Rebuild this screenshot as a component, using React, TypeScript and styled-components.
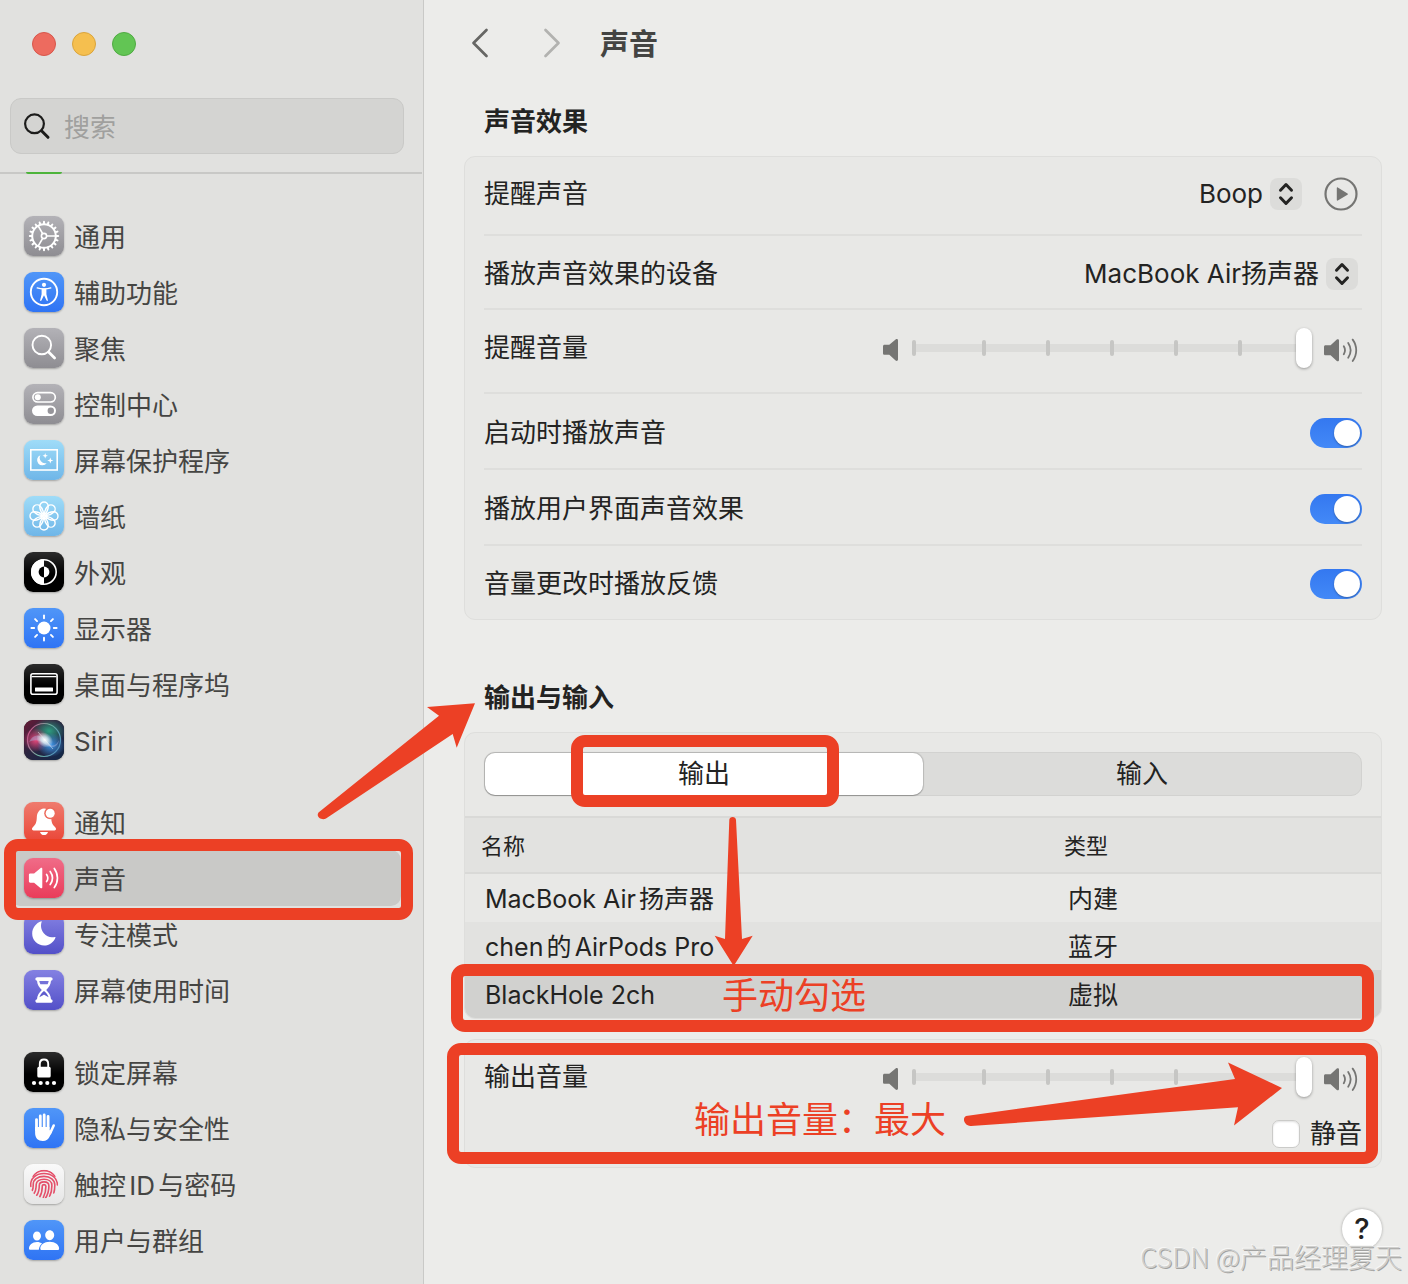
import React, { useState } from 'react';
import styled, { createGlobalStyle, css } from 'styled-components';

const RED = '#ec4025';

const GlobalStyle = createGlobalStyle`
  *, *::before, *::after { box-sizing: border-box; }
  body {
    margin: 0;
    background: #ececea;
    color: #232322;
    font-family: Inter, "Noto Sans CJK SC", sans-serif;
    font-size: 26px;
    line-height: 36px;
    text-autospace: normal;
  }
  button, input, select { font: inherit; color: inherit; margin: 0; }
  button { border: 0; padding: 0; background: none; cursor: pointer; }
  svg { display: block; flex: none; }
`;

/* ---------- window ---------- */

const Window = styled.div`
  position: relative;
  display: grid;
  grid-template-columns: 424px minmax(0, 1fr);
  min-height: 100vh;
  overflow: hidden;
`;

const Sidebar = styled.aside`
  background: #e1e1df;
  border-right: 1px solid #c9c9c7;
  padding-bottom: 16px;
`;

const TrafficLights = styled.div`
  display: flex;
  gap: 16px;
  padding: 32px 32px 42px;
`;

const Light = styled.button<{ $fill: string; $edge: string }>`
  width: 24px;
  height: 24px;
  border-radius: 50%;
  background: ${(p) => p.$fill};
  border: 1px solid ${(p) => p.$edge};
`;

const SearchField = styled.label`
  display: flex;
  align-items: center;
  gap: 13px;
  height: 56px;
  margin: 0 19px 18px 10px;
  padding: 0 12px;
  border: 1px solid #c9c9c7;
  border-radius: 11px;
  background: #d4d4d2;
`;

const SearchInput = styled.input`
  flex: 1;
  min-width: 0;
  border: 0;
  padding: 3px 0 0;
  outline: 0;
  background: none;
  &::placeholder { color: #a0a09e; opacity: 1; }
`;

const ScrollEdge = styled.div`
  height: 2px;
  padding-left: 26px;
  margin-right: 1px;
  background: #c8c8c6;
`;

const ScrolledIcon = styled.div`
  width: 36px;
  height: 2px;
  border-radius: 0 0 8px 8px;
  background: #4db43b;
`;

const Nav = styled.nav`
  display: flex;
  flex-direction: column;
  gap: 26px;
  padding: 34px 22px 0 10px;
`;

const NavGroup = styled.ul`
  list-style: none;
  margin: 0;
  padding: 0;
`;

const NavLink = styled.a<{ $active?: boolean }>`
  position: relative;
  display: flex;
  align-items: center;
  gap: 10px;
  height: 56px;
  padding-left: 14px;
  border-radius: 10px;
  color: #454543;
  text-decoration: none;
  background: ${(p) => (p.$active ? '#c9c9c7' : 'transparent')};
`;

const NavIcon = styled.span<{ $bg: string }>`
  flex: none;
  width: 40px;
  height: 40px;
  border-radius: 9px;
  background: ${(p) => p.$bg};
  box-shadow: 0 1px 2px rgba(0, 0, 0, 0.28);
  overflow: hidden;
`;

const NavLabel = styled.span`
  padding-top: 4px;
`;

/* ---------- content ---------- */

const Main = styled.main`
  padding: 0 26px 36px 40px;
`;

const Header = styled.header`
  display: flex;
  align-items: center;
  height: 86px;
`;

const HistoryButton = styled.button`
  display: grid;
  place-items: center;
  width: 32px;
  height: 40px;
  & + & { margin-left: 40px; }
`;

const PageTitle = styled.h1`
  margin: 0 0 0 32px;
  padding-top: 4px;
  font-size: 29px;
  font-weight: 700;
  color: #444442;
`;

const SectionTitle = styled.h2<{ $spaced?: boolean }>`
  position: relative;
  margin: ${(p) => (p.$spaced ? 60 : 18)}px 0 16px;
  padding-left: 20px;
  font-size: 26px;
  font-weight: 700;
`;

const Card = styled.section`
  position: relative;
  border: 1px solid #dededc;
  border-radius: 11px;
  background: #e8e8e6;
  & + & { margin-top: 20px; }
`;

const Rows = styled.div<{ $roomy?: boolean }>`
  padding: 0 19px ${(p) => (p.$roomy ? 13 : 0)}px;
`;

const Row = styled.div<{ $height: number; $lift?: number; $drop?: number }>`
  display: flex;
  align-items: center;
  justify-content: space-between;
  height: ${(p) => p.$height}px;
  padding-top: ${(p) => p.$drop ?? 0}px;
  padding-bottom: ${(p) => p.$lift ?? 0}px;
  border-bottom: 2px solid #dededc;
  &:last-child { border-bottom: 0; }
`;

const PlainRow = styled.div<{ $height: number; $end?: boolean }>`
  display: flex;
  align-items: center;
  justify-content: ${(p) => (p.$end ? 'flex-end' : 'space-between')};
  height: ${(p) => p.$height}px;
`;

const Controls = styled.div`
  display: flex;
  align-items: center;
  gap: 22px;
  padding-right: 4px;
`;

const PickerBox = styled.span`
  display: grid;
  align-items: center;
  & > * { grid-area: 1 / 1; }
`;

const Picker = styled.select`
  appearance: none;
  border: 0;
  background: none;
  padding: 0 39px 0 0;
  height: 36px;
  text-align-last: right;
`;

const Stepper = styled.span`
  display: grid;
  place-items: center;
  justify-self: end;
  width: 32px;
  height: 32px;
  border-radius: 8px;
  background: #dcdcda;
  pointer-events: none;
`;

const Switch = styled.input`
  appearance: none;
  display: flex;
  align-items: center;
  width: 52px;
  height: 30px;
  padding: 2px;
  border-radius: 15px;
  background: #c8c8c6;
  &::after {
    content: '';
    width: 26px;
    height: 26px;
    border-radius: 50%;
    background: #fff;
    box-shadow: 0 1px 2px rgba(0, 0, 0, 0.3);
  }
  &:checked {
    justify-content: flex-end;
    background: linear-gradient(#3478f0, #4389f7);
  }
`;

const Volume = styled.div`
  display: flex;
  align-items: center;
  gap: 12px;
  padding-right: 4px;
`;

const SliderBox = styled.div`
  display: grid;
  align-items: center;
  width: 400px;
  & > * { grid-area: 1 / 1; }
`;

const Track = styled.div`
  height: 8px;
  border-radius: 4px;
  background: #dcdcda;
`;

const Ticks = styled.div`
  display: grid;
  grid-template-columns: repeat(6, 1fr);
  padding: 0 8px;
`;

const Tick = styled.span`
  width: 4px;
  height: 16px;
  margin-left: -2px;
  border-radius: 2px;
  background: #c6c6c4;
  &:first-child { margin-left: -8px; }
`;

const Range = styled.input`
  appearance: none;
  width: 100%;
  height: 40px;
  background: none;
  &::-webkit-slider-thumb {
    appearance: none;
    width: 16px;
    height: 40px;
    border-radius: 8px;
    background: #fff;
    box-shadow: 0 1px 3px rgba(0, 0, 0, 0.35);
  }
`;

const Segmented = styled.div`
  display: grid;
  grid-template-columns: 1fr 1fr;
  height: 44px;
  margin: 19px 19px 20px;
  border: 1px solid #d2d2d0;
  border-radius: 11px;
  background: #dcdcda;
`;

const Segment = styled.button<{ $on: boolean }>`
  position: relative;
  border-radius: 10px;
  line-height: 36px;
  ${(p) =>
    p.$on &&
    css`
      background: #fff;
      box-shadow: 0 0 1px 1px rgba(0, 0, 0, 0.14), 0 1px 1px rgba(0, 0, 0, 0.2);
    `}
`;

const Table = styled.table`
  width: 100%;
  border-collapse: separate;
  border-spacing: 0;
  table-layout: fixed;
`;

const HeadCell = styled.th<{ $narrow?: boolean }>`
  width: ${(p) => (p.$narrow ? '333px' : 'auto')};
  height: 58px;
  padding: 2px 16px 0;
  border: solid #d9d9d7;
  border-width: 2px 0;
  background: #e2e2e0;
  font-size: 22px;
  font-weight: 400;
  text-align: left;
`;

const BodyRow = styled.tr<{ $bg: string }>`
  position: relative;
  height: 48px;
  & > td { background: ${(p) => p.$bg}; }
  &:last-child > td:first-child { border-bottom-left-radius: 10px; }
  &:last-child > td:last-child { border-bottom-right-radius: 10px; }
`;

const Cell = styled.td`
  padding: 2px 20px 0;
  font-size: 25px;
  white-space: nowrap;
`;

const Mute = styled.label`
  display: flex;
  align-items: center;
  gap: 10px;
`;

const MuteBox = styled.input`
  appearance: none;
  width: 28px;
  height: 28px;
  border: 1px solid #cbcbc9;
  border-radius: 7px;
  background: #fff;
  box-shadow: inset 0 1px 2px rgba(0, 0, 0, 0.12);
  &:checked { background: #3478f0; }
`;

const Footer = styled.footer`
  display: flex;
  justify-content: flex-end;
  padding-top: 41px;
`;

const HelpButton = styled.button`
  width: 40px;
  height: 40px;
  border-radius: 50%;
  background: #fff;
  box-shadow: 0 0 3px rgba(0, 0, 0, 0.3);
  font-size: 29px;
  font-weight: 500;
`;

/* ---------- marks drawn over the settings ---------- */

const Frame = styled.span<{ $inset: string }>`
  position: absolute;
  z-index: 2;
  inset: ${(p) => p.$inset};
  border: 12px solid ${RED};
  border-radius: 14px;
  pointer-events: none;
`;

const ArrowSvg = styled.svg<{ $inset: string }>`
  position: absolute;
  z-index: 3;
  inset: ${(p) => p.$inset};
  fill: ${RED};
  pointer-events: none;
`;

const Note = styled.span<{ $inset: string }>`
  position: absolute;
  z-index: 3;
  inset: ${(p) => p.$inset};
  font-size: 36px;
  font-weight: 400;
  line-height: 40px;
  color: ${RED};
  white-space: nowrap;
`;

const Watermark = styled.div`
  position: absolute;
  right: 6px;
  bottom: 13px;
  z-index: 4;
  font-family: "Noto Sans CJK SC", sans-serif;
  font-size: 27px;
  font-weight: 300;
  line-height: 30px;
  text-autospace: no-autospace;
  color: #cfcfcd;
  text-shadow: 1px 1px 0 #a3a3a1, -1px -1px 0 #f6f6f5;
  pointer-events: none;
`;

/* ---------- icons, each on a 40 x 40 tile ---------- */

const Tile = ({ children }: { children: React.ReactNode }) => (
  <svg width="40" height="40" viewBox="0 0 40 40" fill="none" stroke="#fff" strokeWidth="1.7" strokeLinecap="round" strokeLinejoin="round" aria-hidden="true">
    {children}
  </svg>
);

const turns = (n: number) => Array.from({ length: n }, (_, i) => (360 / n) * i);
const solid = { fill: '#fff', stroke: 'none' };

const GearIcon = () => (
  <Tile>
    <circle cx="20" cy="20" r="11.8" strokeWidth="2" />
    {turns(20).map((a) => (
      <path key={a} d="M20 7.6V5.8" strokeWidth="2" transform={`rotate(${a} 20 20)`} />
    ))}
    <circle cx="20" cy="20" r="2.6" strokeWidth="1.6" />
    {[90, 210, 330].map((a) => (
      <path key={a} d="M20 17V8.6" strokeWidth="1.7" transform={`rotate(${a} 20 20)`} />
    ))}
  </Tile>
);

const AccessIcon = () => (
  <Tile>
    <circle cx="20" cy="20" r="13.2" strokeWidth="1.9" />
    <circle cx="20" cy="12.8" r="2.1" {...solid} />
    <path d="M13.2 15.9c2 .7 4.1 1 6.8 1s4.8-.3 6.8-1" strokeWidth="1.4" />
    <path d="M17.6 16.6h4.8v5.6l1.5 6.1c.1.8-1 1-1.3.3L20 23.2l-2.6 5.4c-.3.7-1.4.5-1.3-.3l1.5-6.1z" {...solid} />
  </Tile>
);

const SpotlightIcon = () => (
  <Tile>
    <circle cx="17.8" cy="17" r="9.3" strokeWidth="1.9" />
    <path d="M24.6 23.9l6 6" strokeWidth="2.8" />
  </Tile>
);

const ControlIcon = () => (
  <Tile>
    <rect x="8.9" y="8.6" width="22.4" height="9.4" rx="4.7" strokeWidth="1.7" />
    <circle cx="13.8" cy="13.3" r="3" {...solid} />
    <rect x="8" y="21.5" width="24" height="10.6" rx="5.3" {...solid} />
    <circle cx="26.8" cy="26.8" r="3.2" fill="#96959a" stroke="none" />
  </Tile>
);

const SaverIcon = () => (
  <Tile>
    <rect x="6.8" y="9.8" width="26.4" height="20.2" strokeWidth="1.6" strokeLinejoin="miter" />
    <path d="M16.4 15.3a5.2 5.2 0 1 0 6.3 7.6 5.3 5.3 0 0 1-6.3-7.6z" {...solid} />
    <path d="M21.2 13l.7 2 2 .7-2 .7-.7 2-.7-2-2-.7 2-.7zM26.3 17.4l.8 2.3 2.3.8-2.3.8-.8 2.3-.8-2.3-2.3-.8 2.3-.8z" {...solid} />
  </Tile>
);

const FlowerIcon = () => (
  <Tile>
    {turns(8).map((a) => (
      <path key={a} d="M20 19C17.4 17 15.800 13.400 15.800 10.200a4.200 4.200 0 0 1 8.400 0C24.200 13.400 22.600 17 20 19z" strokeWidth="1.4" transform={`rotate(${a} 20 20)`} />
    ))}
    <circle cx="20" cy="20" r="3" strokeWidth="1.200" />
  </Tile>
);

const AppearanceIcon = () => (
  <Tile>
    <circle cx="20" cy="20" r="12.2" strokeWidth="1.6" />
    <path d="M20 7a13 13 0 0 0 0 26z" {...solid} />
    <path d="M20 14.6a5.4 5.4 0 0 0 0 10.8z" fill="#000" stroke="none" />
    <path d="M20 14.6a5.4 5.4 0 0 1 0 10.8z" {...solid} />
  </Tile>
);

const DisplayIcon = () => (
  <Tile>
    <circle cx="20" cy="20" r="6.5" {...solid} />
    {turns(8).map((a) => (
      <path key={a} d="M20 10.2V7.4" strokeWidth="1.9" transform={`rotate(${a} 20 20)`} />
    ))}
  </Tile>
);

const DockIcon = () => (
  <Tile>
    <rect x="6.9" y="9.8" width="26.2" height="20.4" rx="2" strokeWidth="1.6" />
    <path d="M8 12.7h24" strokeWidth="1.2" />
    <rect x="11" y="23.4" width="18" height="4" rx=".5" {...solid} />
  </Tile>
);

const SiriIcon = () => (
  <svg width="40" height="40" viewBox="0 0 40 40" aria-hidden="true">
    <defs>
      <linearGradient id="siriBase" x1="0" y1="0" x2="1" y2="1">
        <stop offset="0" stopColor="#6a1a36" />
        <stop offset=".45" stopColor="#2b2440" />
        <stop offset="1" stopColor="#10294a" />
      </linearGradient>
      <radialGradient id="siriGreen"><stop offset="0" stopColor="#2c9d80" /><stop offset="1" stopColor="#2c9d80" stopOpacity="0" /></radialGradient>
      <radialGradient id="siriPink"><stop offset="0" stopColor="#e8487c" /><stop offset="1" stopColor="#e8487c" stopOpacity="0" /></radialGradient>
      <radialGradient id="siriBlue"><stop offset="0" stopColor="#3e96e8" /><stop offset="1" stopColor="#3e96e8" stopOpacity="0" /></radialGradient>
      <radialGradient id="siriGlow"><stop offset="0" stopColor="#fff" /><stop offset=".4" stopColor="#e3f4f8" stopOpacity=".8" /><stop offset="1" stopColor="#fff" stopOpacity="0" /></radialGradient>
      <linearGradient id="siriRing" x1="0" y1=".3" x2="1" y2=".7"><stop offset="0" stopColor="#c9528a" /><stop offset=".5" stopColor="#6fb3a0" /><stop offset="1" stopColor="#4c8ec0" /></linearGradient>
    </defs>
    <rect width="40" height="40" fill="url(#siriBase)" />
    <ellipse cx="25" cy="11" rx="17" ry="13" fill="url(#siriGreen)" />
    <ellipse cx="12" cy="20" rx="13" ry="12" fill="url(#siriPink)" />
    <ellipse cx="27" cy="25" rx="14" ry="12" fill="url(#siriBlue)" />
    <circle cx="20" cy="20" r="16.5" fill="none" stroke="url(#siriRing)" strokeWidth="1.2" />
    <path d="M5 22c5-9 11-8 17-1s10 5 13-1c-1 8-8 9-14 4S9 20 5 22z" fill="#a9b6e0" opacity=".45" />
    <ellipse cx="20.5" cy="19.5" rx="9" ry="7" fill="url(#siriGlow)" transform="rotate(35 20 20)" />
    <path d="M14 12l15 17" stroke="#fff" strokeWidth="1" opacity=".45" />
  </svg>
);

const BellIcon = () => (
  <Tile>
    <path d="M20 6.6c-4.8.6-7 4.3-7.2 8.8-.2 5-1.2 7-3.6 9.4-.9.9-1.2 1.500-1.2 2.300 0 .8.6 1.300 1.500 1.300h21c.9 0 1.500-.5 1.500-1.300 0-.8-.3-1.400-1.200-2.300-2.400-2.400-3.400-4.400-3.600-9.400-.2-4.500-2.400-8.200-7.200-8.800z" {...solid} />
    <circle cx="26.2" cy="11.2" r="6" fill="#ec6b5c" stroke="none" />
    <circle cx="26.2" cy="11.2" r="4.5" {...solid} />
    <path d="M16 30h8c-.5 1.9-2 3.100-4 3.100S16.500 31.900 16 30z" {...solid} />
  </Tile>
);

const SoundIcon = () => (
  <Tile>
    <path d="M6.2 15.4c-.8 0-1.3.6-1.3 1.4v6.5c0 .8.5 1.4 1.3 1.4h3.9l6.3 5.2c.8.7 1.9.4 1.9-.7V10.9c0-1.1-1.1-1.4-1.9-.7l-6.3 5.2z" {...solid} />
    <path d="M22.6 16.4c1.5 2.2 1.5 5 0 7.2M26.2 13.4c2.8 4 2.8 9.200 0 13.200M30.300 10.400c4.200 5.800 4.200 13.400 0 19.200" strokeWidth="1.7" />
  </Tile>
);

const MoonIcon = () => (
  <Tile>
    <path d="M17.3 7.2c.3-.1.6.2.4.6-1.2 3-1 7.6 2.1 11.5 3 3.7 7.2 4.7 11.2 3.6.4-.1.7.2.5.6-1.7 4.600-6 8.100-11.400 8.100A11.900 11.900 0 0 1 8.200 19.700C8.200 13.800 12 8.900 17.300 7.200z" {...solid} />
  </Tile>
);

const HourglassIcon = () => (
  <Tile>
    <path d="M13.4 7.2h13.2c1.3 0 2 .8 2 1.8s-.7 1.7-1.6 1.7c-.2 4-2.3 6.700-4.800 9.300 2.500 2.600 4.600 5.200 4.800 9.300.9 0 1.600.7 1.600 1.700s-.7 1.800-2 1.800H13.400c-1.300 0-2-.8-2-1.800s.7-1.700 1.600-1.700c.2-4.100 2.300-6.700 4.800-9.300-2.500-2.600-4.600-5.300-4.800-9.300-.9 0-1.600-.7-1.600-1.700s.7-1.800 2-1.800z" {...solid} />
    <path d="M15.300 10.900h9.400c-.2 1.300-.6 2.400-1.100 3.400h-7.200c-.5-1-.9-2.100-1.100-3.400z" fill="#7572d8" stroke="none" />
    <path d="M20 21c2 1.800 3.900 3.600 4.600 6.300l-4-2.400c-.4-.2-.8-.2-1.200 0l-4 2.400c.7-2.700 2.600-4.500 4.600-6.300z" fill="#5f5ccd" stroke="none" />
  </Tile>
);

const LockIcon = () => (
  <Tile>
    <rect x="13.3" y="14.8" width="13.4" height="10.8" rx="1.6" {...solid} />
    <path d="M15.800 15v-3c0-2.800 1.700-4.500 4.200-4.500s4.200 1.700 4.200 4.500v3" strokeWidth="1.9" />
    {[10, 16.7, 23.3, 30].map((x) => (
      <circle key={x} cx={x} cy="31" r="2.1" {...solid} />
    ))}
  </Tile>
);

const HandIcon = () => (
  <Tile>
    <path d="M12.500 11.600V22M16.300 8V21M20.200 7V21M24.100 8.500V21" strokeWidth="2.8" />
    <path d="M29.700 17.500l-3.700 8" strokeWidth="2.6" />
    <path d="M11.100 19h14.400v3l2.500 1.500-2.200 4.800c-1.300 3-3.500 4.800-7 4.800-4.800 0-7.700-3-7.700-8z" {...solid} />
  </Tile>
);

const FingerprintIcon = () => (
  <svg width="40" height="40" viewBox="0 0 40 40" fill="none" stroke="#e4506a" strokeWidth="1.6" strokeLinecap="round" aria-hidden="true">
    <clipPath id="fingertip">
      <circle cx="20" cy="20" r="14.200" />
    </clipPath>
    <g clipPath="url(#fingertip)">
      <path d="M9 12.200C11.500 8.600 15.500 6.600 20 6.600s8.500 2 11 5.600" />
      <path d="M6.800 22.500C5.800 15 11.500 9.500 20 9.500c7.800 0 13.300 4.800 13.400 11.500" />
      <path d="M8.200 26.500c1.200-2 1-3.800 1-6.100 0-4.500 4.300-8 10.800-8s10.800 3.500 10.800 8.600c0 3.300-.2 5.500-1 8" />
      <path d="M10 29.500c2.200-3 2.200-5.800 2.200-9.100 0-3 3.300-5.200 7.800-5.200s7.900 2.400 7.900 6.200c0 4-.6 7.600-2.300 11" />
      <path d="M12.600 31.500c2.500-3.500 2.700-7 2.700-10.300 0-2 2-3.300 4.700-3.300s4.900 1.300 4.900 4.100c0 4.500-1.100 8.500-3.300 12" />
      <path d="M15.700 33c2.400-4 2.600-8 2.600-11 0-1.800 3.500-1.900 3.600.3.100 3.500-.7 7.200-2.600 11.200" />
    </g>
  </svg>
);

const UsersIcon = () => (
  <Tile>
    <path d="M13 11.600c2.200 0 4 1.900 4 4.400S15.200 20.500 13 20.500 9 18.500 9 16s1.800-4.400 4-4.400zM13 22c2 0 3.800.6 5.100 1.500-1.900 1.500-3.100 3.700-3.300 6.300H6.400c-.9 0-1.400-.5-1.400-1.400C5 25.200 8.200 22 13 22z" {...solid} />
    <path d="M25.700 10.200c2.500 0 4.500 2.200 4.500 4.900s-2 5.100-4.500 5.100-4.500-2.400-4.500-5.100 2-4.900 4.500-4.900zM25.700 21.800c5.600 0 9.400 3.300 9.400 6.600 0 1-.6 1.500-1.600 1.500H17.900c-1 0-1.600-.5-1.600-1.500 0-3.300 3.800-6.600 9.400-6.600z" {...solid} />
  </Tile>
);

const SpeakerLow = () => (
  <svg width="17" height="28" viewBox="1 0 17 28" fill="#757573" aria-hidden="true">
    <path d="M2.600 10.800h4.700l6.300-5.400c1-.8 2.400-.3 2.400 1v19.200c0 1.300-1.400 1.800-2.400 1l-6.300-5.800H2.600C1.600 20.800 1 20.200 1 19.200v-6.800c0-1 .6-1.600 1.600-1.600z" />
  </svg>
);

const SpeakerHigh = () => (
  <svg width="34" height="28" viewBox="0 0 34 28" fill="#757573" aria-hidden="true">
    <path d="M1.600 11.300h5l6.200-5.700c1-.8 2.200-.3 2.200 1v19.300c0 1.300-1.200 1.800-2.200 1l-6.200-5.600h-5C.6 21.300 0 20.700 0 19.700v-6.800c0-1 .6-1.600 1.600-1.600z" />
    <path d="M19.800 12.300c1.500 2.500 1.500 5.500 0 8M24.200 8.900c3 4.500 3 10.300 0 14.800M28.700 5.600c4.700 6.500 4.700 14.900 0 21.400" fill="none" stroke="#757573" strokeWidth="1.8" strokeLinecap="round" />
  </svg>
);

const StepperIcon = () => (
  <Stepper>
    <svg width="16" height="24" viewBox="0 0 16 24" fill="none" stroke="#232322" strokeWidth="3" strokeLinecap="round" strokeLinejoin="round" aria-hidden="true">
      <path d="M2.500 8.200L8 2.500l5.500 5.700M2.500 15.800L8 21.500l5.500-5.700" />
    </svg>
  </Stepper>
);

/* ---------- data ---------- */

const GREY = 'linear-gradient(#b3b2b7, #8e8d92)';
const BLUE = 'linear-gradient(#5096f8, #2f74f4)';
const SKY = 'linear-gradient(#9fdcf8, #6fb6e8)';
const BLACK = 'linear-gradient(#2c2c2c, #000 55%)';
const INDIGO = 'linear-gradient(#8481e2, #5350c8)';

type Item = { label: string; bg: string; icon: () => React.ReactElement };

const groups: Item[][] = [
  [
    { label: '通用', bg: GREY, icon: GearIcon },
    { label: '辅助功能', bg: BLUE, icon: AccessIcon },
    { label: '聚焦', bg: GREY, icon: SpotlightIcon },
    { label: '控制中心', bg: GREY, icon: ControlIcon },
    { label: '屏幕保护程序', bg: SKY, icon: SaverIcon },
    { label: '墙纸', bg: SKY, icon: FlowerIcon },
    { label: '外观', bg: BLACK, icon: AppearanceIcon },
    { label: '显示器', bg: BLUE, icon: DisplayIcon },
    { label: '桌面与程序坞', bg: BLACK, icon: DockIcon },
    { label: 'Siri', bg: '#222', icon: SiriIcon },
  ],
  [
    { label: '通知', bg: 'linear-gradient(#ef7b6e, #ea4637)', icon: BellIcon },
    { label: '声音', bg: 'linear-gradient(#f06c88, #ea3c5a)', icon: SoundIcon },
    { label: '专注模式', bg: INDIGO, icon: MoonIcon },
    { label: '屏幕使用时间', bg: INDIGO, icon: HourglassIcon },
  ],
  [
    { label: '锁定屏幕', bg: BLACK, icon: LockIcon },
    { label: '隐私与安全性', bg: BLUE, icon: HandIcon },
    { label: '触控ID与密码', bg: 'linear-gradient(#fafafa, #e6e6e6)', icon: FingerprintIcon },
    { label: '用户与群组', bg: BLUE, icon: UsersIcon },
  ],
];

const devices = [
  { name: 'MacBook Air扬声器', type: '内建', bg: '#e8e8e6' },
  { name: 'chen的AirPods Pro', type: '蓝牙', bg: '#e2e2e0' },
  { name: 'BlackHole 2ch', type: '虚拟', bg: '#d1d1cf' },
];

const switches = [
  { id: 'startup', label: '启动时播放声音', height: 76 },
  { id: 'interface', label: '播放用户界面声音效果', height: 76 },
  { id: 'feedback', label: '音量更改时播放反馈', height: 73 },
];

const VolumeSlider = ({ id }: { id: string }) => (
  <Volume>
    <SpeakerLow />
    <SliderBox>
      <Track />
      <Ticks>
        {turns(6).map((t) => (
          <Tick key={t} />
        ))}
      </Ticks>
      <Range id={id} type="range" min="0" max="6" defaultValue="6" />
    </SliderBox>
    <SpeakerHigh />
  </Volume>
);

export default function App() {
  const [tab, setTab] = useState('输出');

  return (
    <>
      <GlobalStyle />
      <Window>
        <Sidebar>
          <TrafficLights>
            <Light $fill="#ed6b5f" $edge="#d7564b" aria-label="关闭" />
            <Light $fill="#f5bf4f" $edge="#daa43c" aria-label="最小化" />
            <Light $fill="#62c554" $edge="#50ab43" aria-label="缩放" />
          </TrafficLights>
          <SearchField>
            <svg width="28" height="28" viewBox="0 0 28 28" fill="none" stroke="#1c1c1b" strokeLinecap="round" aria-hidden="true">
              <circle cx="11.5" cy="11.8" r="9.4" strokeWidth="2.2" />
              <path d="M18.500 18.800l6.500 6.500" strokeWidth="3" />
            </svg>
            <SearchInput type="search" placeholder="搜索" aria-label="搜索" />
          </SearchField>
          <ScrollEdge>
            <ScrolledIcon />
          </ScrollEdge>
          <Nav>
            {groups.map((items) => (
              <NavGroup key={items[0].label}>
                {items.map(({ label, bg, icon: Icon }) => (
                  <li key={label}>
                    <NavLink href="#" $active={label === '声音'}>
                      <NavIcon $bg={bg}>
                        <Icon />
                      </NavIcon>
                      <NavLabel>{label}</NavLabel>
                      {label === '声音' && <Frame $inset="-11px -12px -14px -6px" />}
                    </NavLink>
                  </li>
                ))}
              </NavGroup>
            ))}
          </Nav>
        </Sidebar>

        <Main>
          <Header>
            <HistoryButton aria-label="后退">
              <svg width="18" height="30" viewBox="0 0 18 30" fill="none" stroke="#666664" strokeWidth="2.7" strokeLinecap="round" strokeLinejoin="round">
                <path d="M15.500 2L2.500 15l13 13" />
              </svg>
            </HistoryButton>
            <HistoryButton aria-label="前进">
              <svg width="18" height="30" viewBox="0 0 18 30" fill="none" stroke="#b2b2b0" strokeWidth="2.7" strokeLinecap="round" strokeLinejoin="round">
                <path d="M2.500 2l13 13-13 13" />
              </svg>
            </HistoryButton>
            <PageTitle>声音</PageTitle>
          </Header>

          <SectionTitle>声音效果</SectionTitle>
          <Card>
            <Rows>
              <Row $height={79} $lift={3}>
                <label htmlFor="alert">提醒声音</label>
                <Controls>
                  <PickerBox>
                    <Picker id="alert">
                      <option>Boop</option>
                    </Picker>
                    <StepperIcon />
                  </PickerBox>
                  <button aria-label="播放">
                    <svg width="34" height="34" viewBox="0 0 34 34" aria-hidden="true">
                      <circle cx="17" cy="17" r="15.5" fill="none" stroke="#757573" strokeWidth="2.2" />
                      <path d="M12.800 11v12c0 .6.500.8 1 .6l9.700-5.900c.5-.3.500-1 0-1.300l-9.700-6c-.5-.3-1 0-1 .6z" fill="#757573" />
                    </svg>
                  </button>
                </Controls>
              </Row>
              <Row $height={74} $drop={3}>
                <label htmlFor="device">播放声音效果的设备</label>
                <Controls>
                  <PickerBox>
                    <Picker id="device">
                      <option>MacBook Air扬声器</option>
                    </Picker>
                    <StepperIcon />
                  </PickerBox>
                </Controls>
              </Row>
              <Row $height={84} $lift={6}>
                <label htmlFor="alert-volume">提醒音量</label>
                <VolumeSlider id="alert-volume" />
              </Row>
              {switches.map((s) => (
                <Row key={s.id} $height={s.height} $drop={3}>
                  <label htmlFor={s.id}>{s.label}</label>
                  <Switch id={s.id} type="checkbox" role="switch" defaultChecked />
                </Row>
              ))}
            </Rows>
          </Card>

          <SectionTitle $spaced>
            输出与输入
            <ArrowSvg $inset="22px auto auto -147px" width="160" height="119" viewBox="317 702 160 119" aria-hidden="true">
              <path d="M475 703.300L456.700 747.700 452.700 734 326 818.500c-4 2.500-10.500-1.500-7.500-6L439 715.700 427 707z" />
            </ArrowSvg>
          </SectionTitle>
          <Card>
            <Segmented role="tablist">
              <Segment role="tab" aria-selected={tab === '输出'} $on={tab === '输出'} onClick={() => setTab('输出')}>
                输出
                <Frame $inset="-18px 84px -12px 86px" />
                <ArrowSvg $inset="64px auto auto calc(50% + 10px)" width="40" height="150" viewBox="714 817 40 150" aria-hidden="true">
                  <path d="M729.300 820c0-4 6.700-4 6.700 0L742 939l10.700-3.300L733.700 966 714.700 935.700 725 939z" />
                </ArrowSvg>
              </Segment>
              <Segment role="tab" aria-selected={tab === '输入'} $on={tab === '输入'} onClick={() => setTab('输入')}>
                输入
              </Segment>
            </Segmented>
            <Table>
              <thead>
                <tr>
                  <HeadCell scope="col">名称</HeadCell>
                  <HeadCell scope="col" $narrow>类型</HeadCell>
                </tr>
              </thead>
              <tbody>
                {devices.map((d, i) => (
                  <BodyRow key={d.name} $bg={d.bg}>
                    <Cell>
                      {d.name}
                      {i === 2 && (
                        <>
                          <Frame $inset="-6px 7px -14px -14px" />
                          <Note $inset="6px auto auto 257px">手动勾选</Note>
                        </>
                      )}
                    </Cell>
                    <Cell>{d.type}</Cell>
                  </BodyRow>
                ))}
              </tbody>
            </Table>
          </Card>

          <Card>
            <Rows $roomy>
              <PlainRow $height={74}>
                <label htmlFor="output-volume">输出音量</label>
                <VolumeSlider id="output-volume" />
              </PlainRow>
              <PlainRow $height={40} $end>
                <Mute>
                  <MuteBox type="checkbox" />
                  静音
                </Mute>
              </PlainRow>
            </Rows>
            <Frame $inset="3px 3px 3px -18px" />
            <Note $inset="60px auto auto 229px">输出音量：最大</Note>
            <ArrowSvg $inset="22px 98px auto auto" width="320" height="66" viewBox="963 1062 320 66" aria-hidden="true">
              <path d="M1282 1088L1234 1125.500 1238 1107.300 971 1126c-6 .5-9.500-7.500-5-10L1235 1079 1228 1062.500z" />
            </ArrowSvg>
          </Card>

          <Footer>
            <HelpButton aria-label="帮助">?</HelpButton>
          </Footer>
        </Main>
        <Watermark>CSDN @产品经理夏天</Watermark>
      </Window>
    </>
  );
}
